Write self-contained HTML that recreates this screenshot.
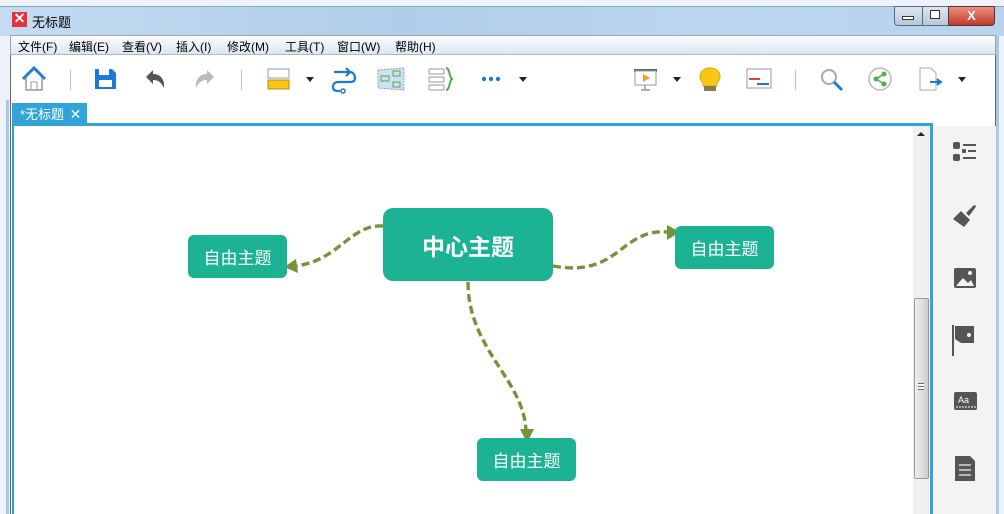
<!DOCTYPE html>
<html><head><meta charset="utf-8"><style>
*{margin:0;padding:0;box-sizing:border-box}
body{width:1004px;height:514px;overflow:hidden;position:relative;background:#eef3fb;font-family:"Liberation Sans","Noto Sans CJK SC",sans-serif}
.abs{position:absolute}
.title{left:0;top:6px;width:1004px;height:30px;background:linear-gradient(90deg,#c4dcf2,#b0cde9 40%,#bcd6f0 70%,#b8d3ee);border-top:1px solid #8aa;}
.menu{left:10px;top:35px;width:986px;height:20px;background:linear-gradient(#fafcfe,#dfe6f0);border:1px solid #9aa6b4;border-bottom:1px solid #b0b8c4;font-size:12px;color:#000}
.menu span{position:absolute;top:2px}
.tb{left:10px;top:55px;width:986px;height:48px;background:#fff;border-left:1px solid #5a6a7a;border-right:1px solid #5a6a7a}
.area{left:10px;top:100px;width:986px;height:414px;background:#fff;border-left:1px solid #5a6a7a;border-right:1px solid #5a6a7a}
.node{position:absolute;background:#1bb393;color:#fff;border-radius:6px;display:flex;align-items:center;justify-content:center;font-size:17px}
.sep{position:absolute;top:70px;width:1px;height:20px;background:#bbb}
.dd{position:absolute;width:0;height:0;border-left:4px solid transparent;border-right:4px solid transparent;border-top:5px solid #222}
</style></head><body>
<div class="abs title"></div>
<div class="abs" style="left:12px;top:12px;width:15px;height:15px;background:#e8303a"></div>
<div class="abs" style="left:12px;top:10px;color:#fff;font-size:14px;font-weight:bold;width:15px;text-align:center">✕</div>
<div class="abs" style="left:32px;top:12px;font-size:13px">无标题</div>
<div class="abs" style="left:894px;top:6px;width:29px;height:20px;background:linear-gradient(#dde6f0,#b8c8da);border:1px solid #5a6a80;border-radius:0 0 0 4px"></div>
<div class="abs" style="left:902px;top:16px;width:12px;height:4px;border:1px solid #334;background:#fff"></div>
<div class="abs" style="left:922px;top:6px;width:27px;height:20px;background:linear-gradient(#dde6f0,#b8c8da);border:1px solid #5a6a80"></div>
<div class="abs" style="left:930px;top:10px;width:10px;height:9px;border:1px solid #334;background:#fff"></div>
<div class="abs" style="left:948px;top:6px;width:47px;height:20px;background:linear-gradient(#e89080,#c03a2a);border:1px solid #5a3030;border-radius:0 0 4px 0;color:#fff;font-weight:bold;text-align:center;font-size:13px;line-height:18px">X</div>
<div class="abs menu">
<span style="left:7px">文件(F)</span><span style="left:58px">编辑(E)</span><span style="left:111px">查看(V)</span><span style="left:165px">插入(I)</span><span style="left:216px">修改(M)</span><span style="left:274px">工具(T)</span><span style="left:326px">窗口(W)</span><span style="left:384px">帮助(H)</span>
</div>
<div class="abs tb"></div>
<div class="abs area"></div>
<div class="abs" style="left:0;top:36px;width:6px;height:478px;background:#eef3fb"></div>
<div class="abs" style="left:6px;top:100px;width:3px;height:414px;background:#a8c8e8"></div>
<div class="abs" style="left:996px;top:36px;width:3px;height:478px;background:#a8c8e8"></div>
<svg class="abs" style="left:0;top:55px" width="1004" height="48">
<path d="M23 24 L34 13 L45 24" fill="none" stroke="#2a7ad8" stroke-width="3"/>
<path d="M26 23 V35 H42 V23" fill="none" stroke="#999" stroke-width="1.5"/><rect x="31" y="27" width="6" height="8" fill="none" stroke="#999"/>
<path d="M95 14 H112 L116 18 V34 H95 Z" fill="#1e78d8"/><rect x="99" y="14" width="10" height="6" fill="#fff"/><rect x="99" y="25" width="13" height="7" fill="#fff"/>
<path d="M146 22 L153 15 V19 C160 19 165 24 164 33 C161 27 158 25 153 25 V29 Z" fill="#555"/>
<path d="M214 22 L207 15 V19 C200 19 195 24 196 33 C199 27 202 25 207 25 V29 Z" fill="#bbb"/>
<rect x="268" y="14" width="21" height="9" fill="#fff" stroke="#999"/><rect x="268" y="25" width="21" height="9" fill="#f8c619" stroke="#b89000"/>
<path d="M334 17 H350 M346 13 L350 17 L346 21 M350 17 C353 17 355 20 355 23 C355 26 353 27 350 27 H338 C335 27 333 29 333 32 C333 35 335 36 338 36 H340" fill="none" stroke="#1e78d8" stroke-width="2.2"/><circle cx="343" cy="36" r="2" fill="none" stroke="#1e78d8" stroke-width="1.5"/>
<path d="M378 15 L404 13 V35 L378 33 Z" fill="#cde0f4" stroke="#8ab" stroke-dasharray="2 1"/><rect x="381" y="21" width="8" height="5" fill="none" stroke="#5aa848"/><rect x="393" y="16" width="7" height="5" fill="none" stroke="#5aa848"/><rect x="393" y="27" width="7" height="5" fill="none" stroke="#5aa848"/>
<rect x="429" y="14" width="15" height="5" fill="none" stroke="#999" rx="1"/><rect x="429" y="22" width="15" height="5" fill="none" stroke="#999" rx="1"/><rect x="429" y="30" width="15" height="5" fill="none" stroke="#999" rx="1"/>
<path d="M446 13 C450 13 449 22 452 24 C449 26 450 35 446 35" fill="none" stroke="#4caf50" stroke-width="2"/>
<circle cx="484" cy="24" r="2.2" fill="#1e78d8"/><circle cx="491" cy="24" r="2.2" fill="#1e78d8"/><circle cx="498" cy="24" r="2.2" fill="#1e78d8"/>
<rect x="634" y="14" width="23" height="3" fill="#666"/><rect x="635" y="16" width="21" height="14" fill="#fff" stroke="#999"/><path d="M643 19 L650 23 L643 27Z" fill="#f5a020"/><path d="M645 30 V35 M641 35 H650" stroke="#999" stroke-width="1.5"/>
<path d="M703 28 C697 23 700 13 710 13 C720 13 723 23 717 28 V31 H703Z" fill="#f8c619" stroke="#e0a800"/><rect x="704" y="31" width="12" height="5" fill="#8a7a50"/>
<rect x="747" y="14" width="24" height="19" fill="#fff" stroke="#999"/><rect x="749" y="23" width="11" height="2" fill="#e84040"/><rect x="757" y="28" width="12" height="2" fill="#1e78d8"/>
<circle cx="829" cy="22" r="7" fill="#fff" stroke="#aaa" stroke-width="2"/><path d="M834 27 L842 35" stroke="#1e78d8" stroke-width="3"/>
<circle cx="880" cy="24" r="11" fill="#fff" stroke="#bbb" stroke-width="1.5"/><path d="M876 24 L884 19 M876 24 L884 29" stroke="#4caf50" stroke-width="1.5"/><circle cx="876" cy="24" r="2.5" fill="#4caf50"/><circle cx="884" cy="19" r="2.5" fill="#4caf50"/><circle cx="884" cy="29" r="2.5" fill="#4caf50"/>
<path d="M920 13 H931 L936 18 V35 H920Z" fill="#fff" stroke="#aaa"/><path d="M930 27 H940 M937 24 L941 27 L937 30" stroke="#1e78d8" stroke-width="2" fill="#1e78d8"/>
</svg>
<div class="sep" style="left:70px"></div><div class="sep" style="left:241px"></div><div class="sep" style="left:795px"></div>
<div class="dd" style="left:306px;top:77px"></div><div class="dd" style="left:519px;top:77px"></div><div class="dd" style="left:673px;top:77px"></div><div class="dd" style="left:958px;top:77px"></div>
<div class="abs" style="left:12px;top:103px;width:75px;height:22px;background:#30a4d8;color:#fff;font-size:13px;line-height:22px;padding-left:8px">*无标题 <span style="margin-left:2px;font-size:14px">✕</span></div>
<div class="abs" style="left:12px;top:123px;width:921px;height:3px;background:#30a4d8"></div>
<div class="abs" style="left:12px;top:123px;width:2px;height:391px;background:#30a4d8"></div>
<div class="abs" style="left:930px;top:123px;width:3px;height:391px;background:#30a4d8"></div>
<div class="abs" style="left:913px;top:126px;width:17px;height:388px;background:#f0f0f0"></div>
<div class="abs" style="left:917px;top:132px;border-left:4px solid transparent;border-right:4px solid transparent;border-bottom:4px solid #222"></div>
<div class="abs" style="left:914px;top:298px;width:15px;height:181px;background:linear-gradient(90deg,#eee,#ddd 60%,#ccc);border:1px solid #999;border-radius:2px"></div>
<div class="abs" style="left:918px;top:383px;width:6px;height:7px;border-top:1px solid #666;border-bottom:1px solid #666;background:linear-gradient(#fff 2px,#666 2px,#666 3px,#fff 3px)"></div>
<div class="abs" style="left:933px;top:126px;width:63px;height:388px;background:#f3f3f3"></div>
<svg class="abs" style="left:933px;top:126px" width="63" height="388">
<g fill="#555">
<rect x="20" y="16" width="7" height="7" rx="2"/><rect x="20" y="28" width="7" height="7" rx="2"/><rect x="29" y="23" width="4" height="4" rx="1"/>
<rect x="30" y="18" width="13" height="2"/><rect x="35" y="24" width="8" height="2"/><rect x="30" y="31" width="13" height="2"/>
<path d="M33 87 L40 80 C42 78 44 80 42 82 L36 90Z"/><path d="M28 85 L37 94 L31 101 L20 93 Z"/>
<rect x="21" y="142" width="22" height="20" rx="2"/>
<path d="M20 199 V230" stroke="#555" stroke-width="2"/><path d="M22 200 H41 V217 H28 L22 213Z"/>
<rect x="21" y="266" width="23" height="18" rx="2"/>
<path d="M22 330 H37 L42 335 V355 H22Z"/>
</g>
<path d="M23 160 L30 152 L35 157 L38 154 L41 160Z" fill="#f3f3f3"/><circle cx="37" cy="147" r="2" fill="#f3f3f3"/>
<circle cx="36" cy="209" r="2" fill="#f3f3f3"/>
<text x="25" y="277" font-size="9" fill="#fff" font-family="Liberation Sans">Aa</text>
<path d="M23 281 H43" stroke="#fff" stroke-dasharray="2 1"/>
<path d="M26 339 H38 M26 344 H38 M26 349 H38" stroke="#f3f3f3" stroke-width="1.2"/>
</svg>
<svg class="abs" style="left:0;top:0" width="1004" height="514">
<g fill="none" stroke="#76933c" stroke-width="3.4" stroke-dasharray="8 4">
<path d="M383 226 C350 224 340 260 296 266"/>
<path d="M553 266 C620 278 620 228 668 232"/>
<path d="M468 282 C468 350 525 380 526 432"/>
</g>
<g fill="#76933c">
<path d="M284 267 L296 259 L298 273Z"/>
<path d="M680 232 L667 225 L667 240Z"/>
<path d="M527 443 L520 429 L534 429Z"/>
</g>
</svg>
<div class="node" style="left:383px;top:208px;width:170px;height:73px;border-radius:10px;font-size:23px;font-weight:bold">中心主题</div>
<div class="node" style="left:188px;top:235px;width:99px;height:43px">自由主题</div>
<div class="node" style="left:675px;top:226px;width:99px;height:43px">自由主题</div>
<div class="node" style="left:477px;top:438px;width:99px;height:43px">自由主题</div>
</body></html>
